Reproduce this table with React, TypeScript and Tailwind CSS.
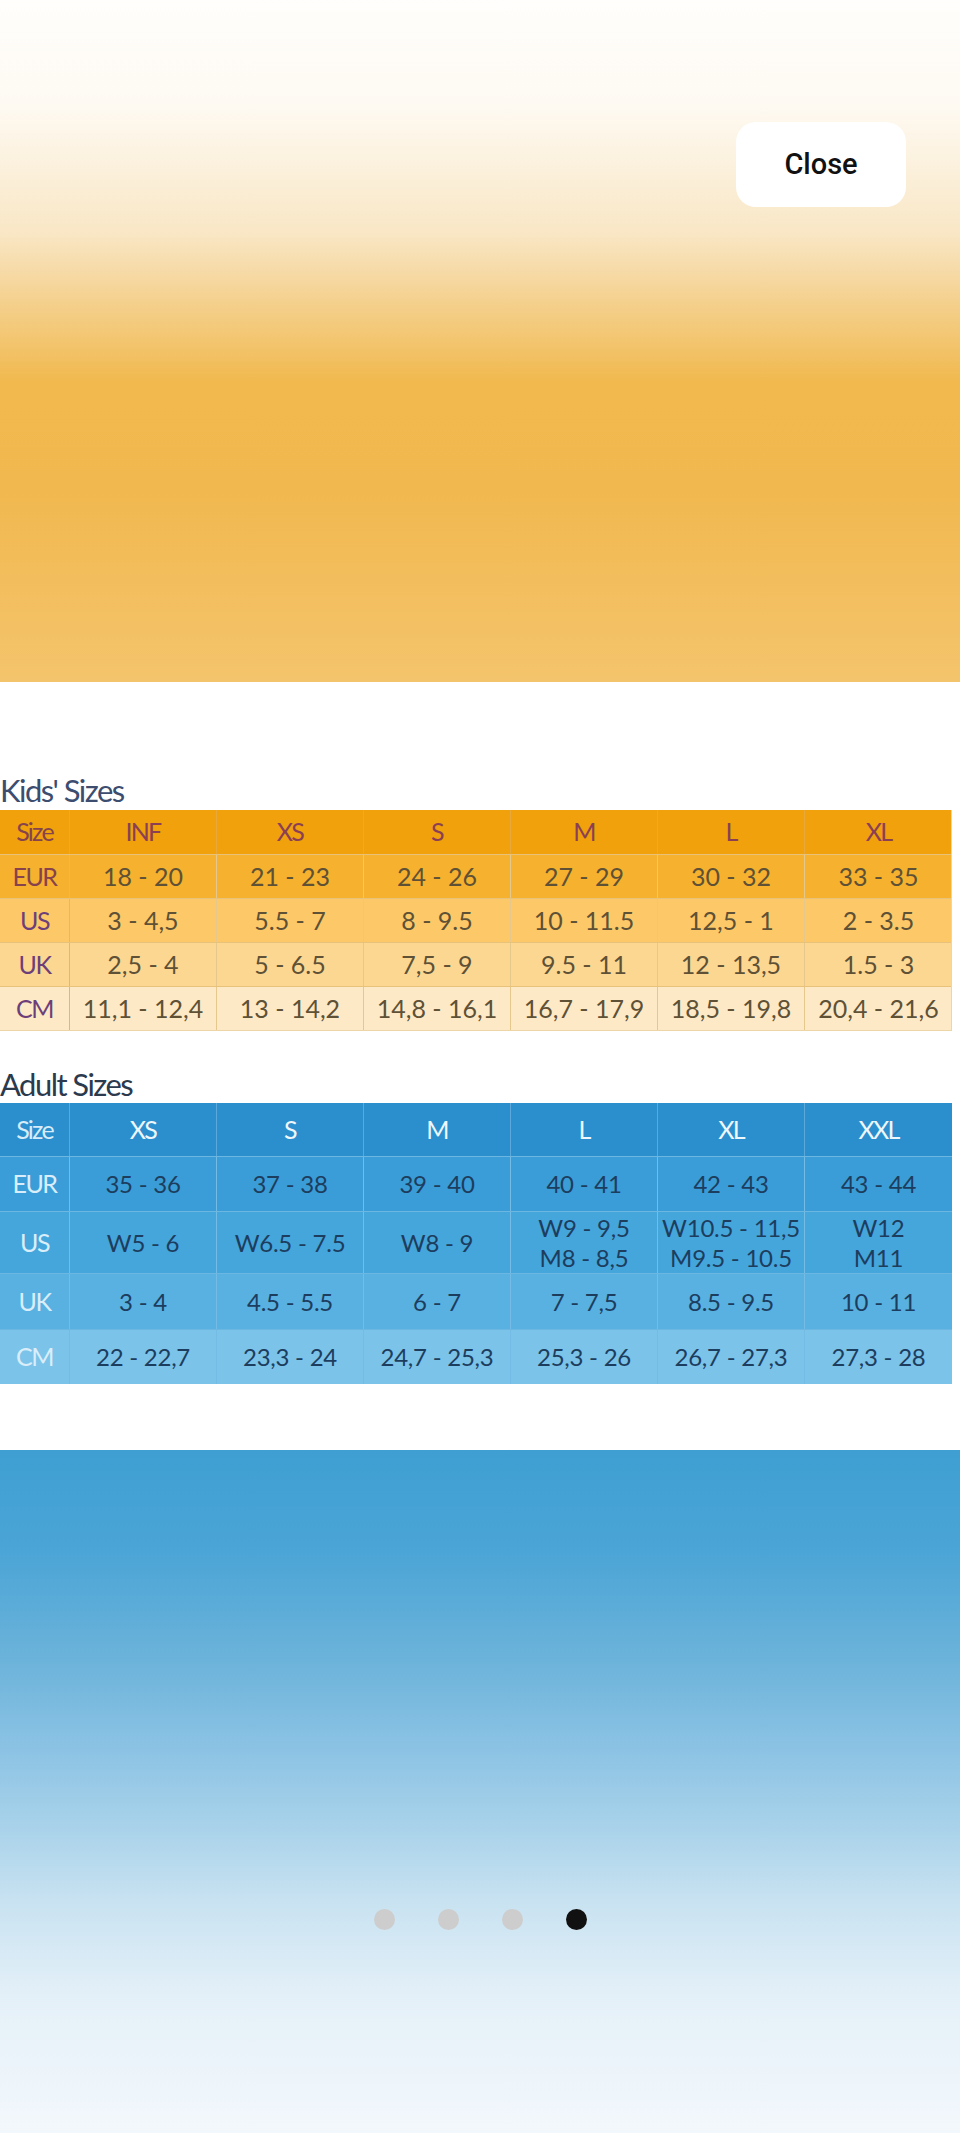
const kidsHead = ['INF', 'XS', 'S', 'M', 'L', 'XL'];
const kidsRows: { label: string; bg: string; cells: string[] }[] = [
  { label: 'EUR', bg: 'bg-[#f6b22e]', cells: ['18 - 20', '21 - 23', '24 - 26', '27 - 29', '30 - 32', '33 - 35'] },
  { label: 'US', bg: 'bg-[#fcc868]', cells: ['3 - 4,5', '5.5 - 7', '8 - 9.5', '10 - 11.5', '12,5 - 1', '2 - 3.5'] },
  { label: 'UK', bg: 'bg-[#fcd792]', cells: ['2,5 - 4', '5 - 6.5', '7,5 - 9', '9.5 - 11', '12 - 13,5', '1.5 - 3'] },
  { label: 'CM', bg: 'bg-[#fde9c6]', cells: ['11,1 - 12,4', '13 - 14,2', '14,8 - 16,1', '16,7 - 17,9', '18,5 - 19,8', '20,4 - 21,6'] },
];

const adultHead = ['XS', 'S', 'M', 'L', 'XL', 'XXL'];
const adultRows: { label: string; bg: string; h: string; cells: string[][] }[] = [
  { label: 'EUR', bg: 'bg-[#3a9dd7]', h: 'h-[55px]', cells: [['35 - 36'], ['37 - 38'], ['39 - 40'], ['40 - 41'], ['42 - 43'], ['43 - 44']] },
  {
    label: 'US',
    bg: 'bg-[#45a6db]',
    h: 'h-[62px]',
    cells: [['W5 - 6'], ['W6.5 - 7.5'], ['W8 - 9'], ['W9 - 9,5', 'M8 - 8,5'], ['W10.5 - 11,5', 'M9.5 - 10.5'], ['W12', 'M11']],
  },
  { label: 'UK', bg: 'bg-[#58b1e0]', h: 'h-[56px]', cells: [['3 - 4'], ['4.5 - 5.5'], ['6 - 7'], ['7 - 7,5'], ['8.5 - 9.5'], ['10 - 11']] },
  { label: 'CM', bg: 'bg-[#7bc3e8]', h: 'h-[55px]', cells: [['22 - 22,7'], ['23,3 - 24'], ['24,7 - 25,3'], ['25,3 - 26'], ['26,7 - 27,3'], ['27,3 - 28']] },
];

const grid = 'grid grid-cols-[70px_repeat(6,147px)]';

function KidsTable() {
  return (
    <div className="w-[952px] border-b border-r border-[#ecd6a8]">
      <div className={`${grid} h-[44px] bg-[#f0a10c]`}>
        <div className="flex items-center justify-center text-[25px] tracking-[-0.07em] text-[#86434d] border-r border-[#e8a93a]">
          Size
        </div>
        {kidsHead.map((h) => (
          <div
            key={h}
            className="flex items-center justify-center text-[25px] tracking-[-0.07em] text-[#8a3f55] border-r border-[#e8a93a] last:border-r-0"
          >
            {h}
          </div>
        ))}
      </div>
      {kidsRows.map((r) => (
        <div key={r.label} className={`${grid} h-[44px] ${r.bg} border-t border-[#e9c27a]`}>
          <div
            className={`flex items-center justify-center text-[25px] tracking-[-0.06em] border-r border-[#e2b870] ${
              r.label === 'EUR' ? 'text-[#86434d]' : 'text-[#6d3f7a]'
            }`}
          >
            {r.label}
          </div>
          {r.cells.map((c, i) => (
            <div
              key={i}
              className="flex items-center justify-center text-[25px] text-[#5e5136] border-r border-[#e6c88c] last:border-r-0 whitespace-nowrap"
            >
              {c}
            </div>
          ))}
        </div>
      ))}
    </div>
  );
}

function AdultTable() {
  return (
    <div className="w-[952px]">
      <div className={`${grid} h-[53px] bg-[#2b8fcd]`}>
        <div className="flex items-center justify-center text-[25px] tracking-[-0.07em] text-[#d6ecf8] border-r border-[#5aa9da]">
          Size
        </div>
        {adultHead.map((h) => (
          <div
            key={h}
            className="flex items-center justify-center text-[25px] tracking-[-0.07em] text-[#eef7fc] border-r border-[#5aa9da] last:border-r-0"
          >
            {h}
          </div>
        ))}
      </div>
      {adultRows.map((r) => (
        <div key={r.label} className={`${grid} ${r.h} ${r.bg} border-t border-[#6cb6e2]`}>
          <div className="flex items-center justify-center text-[25px] tracking-[-0.06em] text-[#d9eefa] border-r border-[#74bce5]">
            {r.label}
          </div>
          {r.cells.map((c, i) => (
            <div
              key={i}
              className="flex flex-col items-center justify-center text-[24px] leading-[30px] tracking-[-0.01em] text-[#1d3d5e] border-r border-[#74bce5] last:border-r-0 whitespace-nowrap"
            >
              {c.map((line) => (
                <span key={line}>{line}</span>
              ))}
            </div>
          ))}
        </div>
      ))}
    </div>
  );
}

export default function App() {
  return (
    <div className="w-[960px] h-[2133px] flex flex-col bg-white font-['Lato','Noto_Sans',sans-serif]">
      <div className="h-[682px] flex justify-end pt-[122px] pr-[54px] bg-[linear-gradient(to_bottom,#fffefc_0%,#fefaf3_15%,#f9e7c6_34%,#f4cf8a_45%,#f1b94e_56%,#f1b84f_72%,#f4c46c_100%)]">
        <button className="w-[170px] h-[85px] rounded-[20px] bg-white text-[29px] font-medium text-[#111] font-['Roboto','Liberation_Sans',sans-serif]">
          Close
        </button>
      </div>

      <div className="h-[768px] pt-[89px]">
        <div className="h-[39px] text-[31px] leading-[39px] tracking-[-0.05em] text-[#3c4d70]">Kids' Sizes</div>
        <KidsTable />
        <div className="h-[38px] mt-[34px] text-[31px] leading-[38px] tracking-[-0.05em] text-[#2c3a4e]">
          Adult Sizes
        </div>
        <AdultTable />
      </div>

      <div className="h-[683px] pt-[459px] bg-[linear-gradient(to_bottom,#3f9fd2_0%,#4ba5d6_15%,#6ab2da_30%,#8cc3e4_44%,#a8d2ea_55%,#c8e2f1_66%,#e4f0f8_80%,#f3f8fc_100%)]">
        <div className="flex justify-center gap-[43px]">
          <span className="w-[21px] h-[21px] rounded-full bg-[#cdcdcd]" />
          <span className="w-[21px] h-[21px] rounded-full bg-[#cdcdcd]" />
          <span className="w-[21px] h-[21px] rounded-full bg-[#cdcdcd]" />
          <span className="w-[21px] h-[21px] rounded-full bg-[#111111]" />
        </div>
      </div>
    </div>
  );
}
